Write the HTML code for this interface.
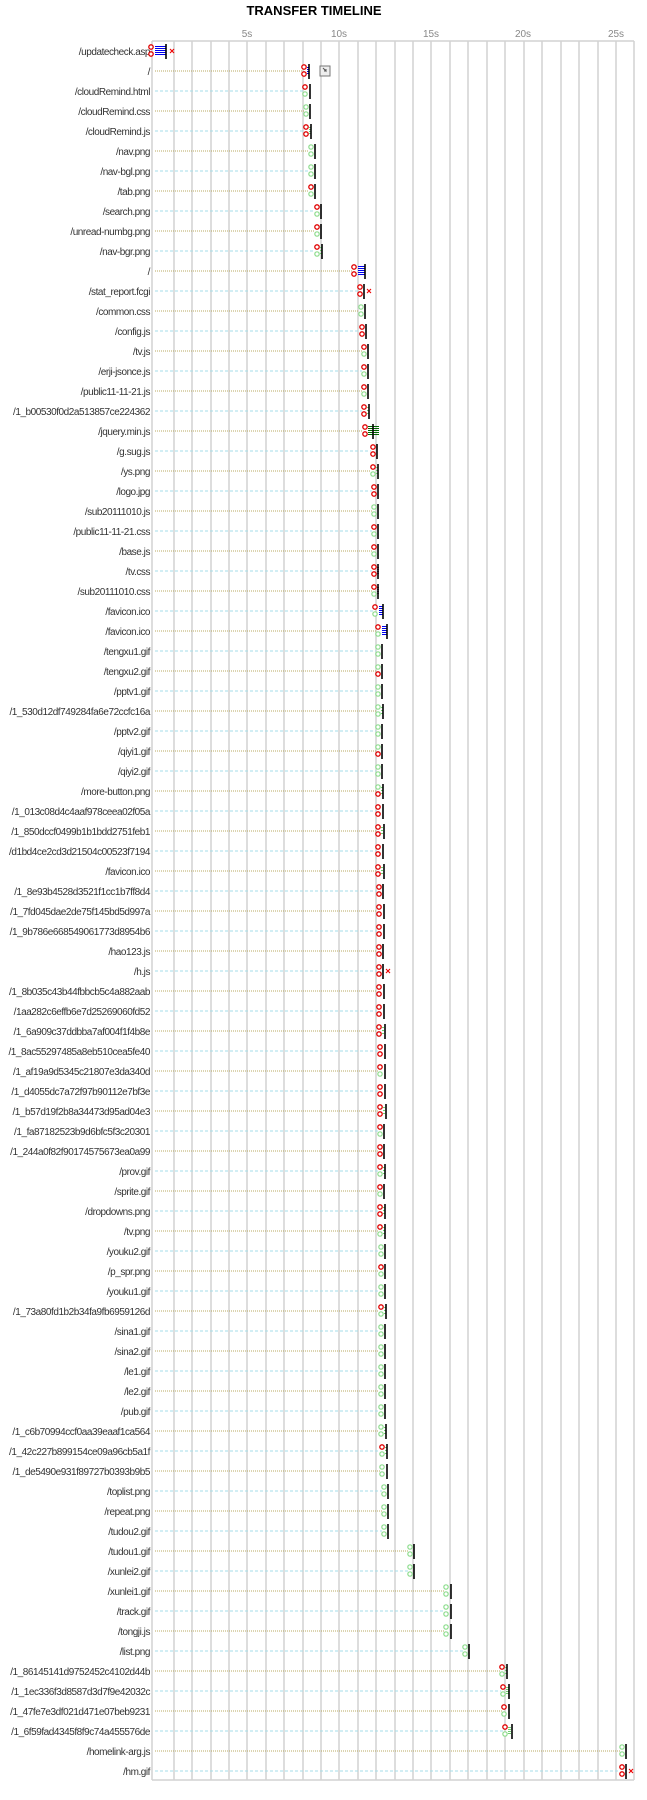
<!DOCTYPE html>
<html><head><meta charset="utf-8">
<style>
html,body{margin:0;padding:0;background:#fff;}
svg{display:block;}
text.l{font-family:"Liberation Sans",sans-serif;font-size:10px;fill:#333;text-anchor:end;letter-spacing:-0.45px;}
text.a{font-family:"Liberation Sans",sans-serif;font-size:10px;fill:#888;text-anchor:middle;}
.gr{stroke:#d2d2d2;stroke-width:1.5;}
.o{stroke:#b8a860;stroke-width:1;stroke-dasharray:1 1;fill:none;}
.c{stroke:#a6dde8;stroke-width:1;stroke-dasharray:3 2;fill:none;}
.e{stroke:#000;stroke-width:1.6;}
.t{stroke:#70d070;stroke-width:1;}
.p{stroke:#803080;stroke-width:1;}
.b{stroke:#0000ee;stroke-width:1;}
.dg{stroke:#006600;stroke-width:1;}
.x{stroke:#e00;stroke-width:1.1;}
</style></head><body>
<svg width="647" height="1800" viewBox="0 0 647 1800" xmlns="http://www.w3.org/2000/svg">
<defs>
<circle id="r" r="2.2" fill="#fff" stroke="#e00000" stroke-width="1.3"/>
<circle id="g" r="2.2" fill="#fff" stroke="#90dd90" stroke-width="1.2"/>
</defs>
<text x="314" y="15" text-anchor="middle" font-family="'Liberation Sans',sans-serif" font-size="13" font-weight="bold" fill="#000">TRANSFER TIMELINE</text>
<text class="a" x="247" y="37">5s</text>
<text class="a" x="339" y="37">10s</text>
<text class="a" x="431" y="37">15s</text>
<text class="a" x="523" y="37">20s</text>
<text class="a" x="616" y="37">25s</text>
<g class="gr">
<path d="M152 41V1780M174 41V1780M192 41V1780M211 41V1780M229 41V1780M247 41V1780M266 41V1780M284 41V1780M303 41V1780M321 41V1780M339 41V1780M358 41V1780M376 41V1780M395 41V1780M413 41V1780M431 41V1780M450 41V1780M468 41V1780M487 41V1780M505 41V1780M524 41V1780M542 41V1780M561 41V1780M579 41V1780M598 41V1780M616 41V1780M634 41V1780M152 41H634M152 1780H634"/>
</g>

<g transform="translate(0,51)"><text class="l" x="150" y="4">/updatecheck.asp</text><use href="#r" x="151" y="-4"/><use href="#r" x="151" y="3"/><path class="b" d="M155 -4.5H166M155 -2.5H166M155 -0.5H166M155 1.5H166M155 3.5H166"/><path class="e" d="M166 -7V8"/><path class="x" d="M170 -2l4 4M174 -2l-4 4"/></g>
<g transform="translate(0,71)"><text class="l" x="150" y="4">/</text><path class="o" d="M155 0H302"/><use href="#r" x="304" y="-4"/><use href="#r" x="304" y="3"/><path class="b" d="M307 -3.5H309M307 -1.5H309M307 0.5H309M307 2.5H309"/><path class="e" d="M309 -7V8"/><rect x="320" y="-5" width="10" height="10" fill="#eee" stroke="#777" stroke-width="1"/><path d="M323 -3l3 3v-2M326 0h-2" stroke="#555" fill="none"/></g>
<g transform="translate(0,91)"><text class="l" x="150" y="4">/cloudRemind.html</text><path class="c" d="M155 0H303"/><use href="#r" x="305" y="-4"/><use href="#g" x="305" y="3"/><path class="e" d="M310 -7V8"/></g>
<g transform="translate(0,111)"><text class="l" x="150" y="4">/cloudRemind.css</text><path class="o" d="M155 0H304"/><use href="#g" x="306" y="-4"/><use href="#g" x="306" y="3"/><path class="e" d="M310 -7V8"/></g>
<g transform="translate(0,131)"><text class="l" x="150" y="4">/cloudRemind.js</text><path class="c" d="M155 0H304"/><use href="#r" x="306" y="-4"/><use href="#r" x="306" y="3"/><path class="t" d="M309 -3.5h2M309 -1.5h2M309 0.5h2M309 2.5h2"/><path class="e" d="M311 -7V8"/></g>
<g transform="translate(0,151)"><text class="l" x="150" y="4">/nav.png</text><path class="o" d="M155 0H309"/><use href="#g" x="311" y="-4"/><use href="#g" x="311" y="3"/><path class="e" d="M315 -7V8"/></g>
<g transform="translate(0,171)"><text class="l" x="150" y="4">/nav-bgl.png</text><path class="c" d="M155 0H309"/><use href="#g" x="311" y="-4"/><use href="#g" x="311" y="3"/><path class="e" d="M315 -7V8"/></g>
<g transform="translate(0,191)"><text class="l" x="150" y="4">/tab.png</text><path class="o" d="M155 0H309"/><use href="#r" x="311" y="-4"/><use href="#g" x="311" y="3"/><path class="e" d="M315 -7V8"/></g>
<g transform="translate(0,211)"><text class="l" x="150" y="4">/search.png</text><path class="c" d="M155 0H315"/><use href="#r" x="317" y="-4"/><use href="#g" x="317" y="3"/><path class="e" d="M321 -7V8"/></g>
<g transform="translate(0,231)"><text class="l" x="150" y="4">/unread-numbg.png</text><path class="o" d="M155 0H315"/><use href="#r" x="317" y="-4"/><use href="#g" x="317" y="3"/><path class="e" d="M321 -7V8"/></g>
<g transform="translate(0,251)"><text class="l" x="150" y="4">/nav-bgr.png</text><path class="c" d="M155 0H315"/><use href="#r" x="317" y="-4"/><use href="#g" x="317" y="3"/><path class="t" d="M320 -3.5h2M320 -0.5h2M320 2.5h2"/><path class="e" d="M322 -7V8"/></g>
<g transform="translate(0,271)"><text class="l" x="150" y="4">/</text><path class="o" d="M155 0H352"/><use href="#r" x="354" y="-4"/><use href="#r" x="354" y="3"/><path class="b" d="M358 -4.5H365M358 -2.5H365M358 -0.5H365M358 1.5H365M358 3.5H365"/><path class="e" d="M365 -7V8"/></g>
<g transform="translate(0,291)"><text class="l" x="150" y="4">/stat_report.fcgi</text><path class="c" d="M155 0H358"/><use href="#r" x="360" y="-4"/><use href="#r" x="360" y="3"/><path class="e" d="M364 -7V8"/><path class="x" d="M367 -2l4 4M371 -2l-4 4"/></g>
<g transform="translate(0,311)"><text class="l" x="150" y="4">/common.css</text><path class="o" d="M155 0H359"/><use href="#g" x="361" y="-4"/><use href="#g" x="361" y="3"/><path class="e" d="M365 -7V8"/></g>
<g transform="translate(0,331)"><text class="l" x="150" y="4">/config.js</text><path class="c" d="M155 0H360"/><use href="#r" x="362" y="-4"/><use href="#r" x="362" y="3"/><path class="e" d="M366 -7V8"/></g>
<g transform="translate(0,351)"><text class="l" x="150" y="4">/tv.js</text><path class="o" d="M155 0H362"/><use href="#r" x="364" y="-4"/><use href="#g" x="364" y="3"/><path class="e" d="M368 -7V8"/></g>
<g transform="translate(0,371)"><text class="l" x="150" y="4">/erji-jsonce.js</text><path class="c" d="M155 0H362"/><use href="#r" x="364" y="-4"/><use href="#g" x="364" y="3"/><path class="e" d="M368 -7V8"/></g>
<g transform="translate(0,391)"><text class="l" x="150" y="4">/public11-11-21.js</text><path class="o" d="M155 0H362"/><use href="#r" x="364" y="-4"/><use href="#g" x="364" y="3"/><path class="e" d="M368 -7V8"/></g>
<g transform="translate(0,411)"><text class="l" x="150" y="4">/1_b00530f0d2a513857ce224362</text><path class="c" d="M155 0H362"/><use href="#r" x="364" y="-4"/><use href="#r" x="364" y="3"/><path class="t" d="M367 -3.5h2M367 -0.5h2M367 2.5h2"/><path class="e" d="M369 -7V8"/></g>
<g transform="translate(0,431)"><text class="l" x="150" y="4">/jquery.min.js</text><path class="o" d="M155 0H363"/><use href="#r" x="365" y="-4"/><use href="#r" x="365" y="3"/><path class="dg" d="M368 -4.5H379M368 -2.5H379M368 -0.5H379M368 1.5H379M368 3.5H379"/><path class="e" d="M373 -7V8"/></g>
<g transform="translate(0,451)"><text class="l" x="150" y="4">/g.sug.js</text><path class="c" d="M155 0H371"/><use href="#r" x="373" y="-4"/><use href="#r" x="373" y="3"/><path class="e" d="M377 -7V8"/></g>
<g transform="translate(0,471)"><text class="l" x="150" y="4">/ys.png</text><path class="o" d="M155 0H371"/><use href="#r" x="373" y="-4"/><use href="#g" x="373" y="3"/><path class="t" d="M376 -3.5h2M376 -0.5h2M376 2.5h2"/><path class="e" d="M378 -7V8"/></g>
<g transform="translate(0,491)"><text class="l" x="150" y="4">/logo.jpg</text><path class="c" d="M155 0H372"/><use href="#r" x="374" y="-4"/><use href="#r" x="374" y="3"/><path class="e" d="M378 -7V8"/></g>
<g transform="translate(0,511)"><text class="l" x="150" y="4">/sub20111010.js</text><path class="o" d="M155 0H372"/><use href="#g" x="374" y="-4"/><use href="#g" x="374" y="3"/><path class="e" d="M378 -7V8"/></g>
<g transform="translate(0,531)"><text class="l" x="150" y="4">/public11-11-21.css</text><path class="c" d="M155 0H372"/><use href="#r" x="374" y="-4"/><use href="#g" x="374" y="3"/><path class="e" d="M378 -7V8"/></g>
<g transform="translate(0,551)"><text class="l" x="150" y="4">/base.js</text><path class="o" d="M155 0H372"/><use href="#r" x="374" y="-4"/><use href="#g" x="374" y="3"/><path class="e" d="M378 -7V8"/></g>
<g transform="translate(0,571)"><text class="l" x="150" y="4">/tv.css</text><path class="c" d="M155 0H372"/><use href="#r" x="374" y="-4"/><use href="#r" x="374" y="3"/><path class="p" d="M377 -3.5h2M377 -1.5h2M377 0.5h2M377 2.5h2"/><path class="e" d="M378 -7V8"/></g>
<g transform="translate(0,591)"><text class="l" x="150" y="4">/sub20111010.css</text><path class="o" d="M155 0H372"/><use href="#r" x="374" y="-4"/><use href="#g" x="374" y="3"/><path class="p" d="M377 -3.5h2M377 -1.5h2M377 0.5h2M377 2.5h2"/><path class="e" d="M378 -7V8"/></g>
<g transform="translate(0,611)"><text class="l" x="150" y="4">/favicon.ico</text><path class="c" d="M155 0H373"/><use href="#r" x="375" y="-4"/><use href="#g" x="375" y="3"/><path class="b" d="M379 -4.5H383M379 -2.5H383M379 -0.5H383M379 1.5H383M379 3.5H383"/><path class="e" d="M383 -7V8"/></g>
<g transform="translate(0,631)"><text class="l" x="150" y="4">/favicon.ico</text><path class="o" d="M155 0H376"/><use href="#r" x="378" y="-4"/><use href="#g" x="378" y="3"/><path class="b" d="M382 -4.5H387M382 -2.5H387M382 -0.5H387M382 1.5H387M382 3.5H387"/><path class="e" d="M387 -7V8"/></g>
<g transform="translate(0,651)"><text class="l" x="150" y="4">/tengxu1.gif</text><path class="c" d="M155 0H376"/><use href="#g" x="378" y="-4"/><use href="#g" x="378" y="3"/><path class="e" d="M382 -7V8"/></g>
<g transform="translate(0,671)"><text class="l" x="150" y="4">/tengxu2.gif</text><path class="o" d="M155 0H376"/><use href="#g" x="378" y="-4"/><use href="#r" x="378" y="3"/><path class="e" d="M382 -7V8"/></g>
<g transform="translate(0,691)"><text class="l" x="150" y="4">/pptv1.gif</text><path class="c" d="M155 0H376"/><use href="#g" x="378" y="-4"/><use href="#g" x="378" y="3"/><path class="e" d="M382 -7V8"/></g>
<g transform="translate(0,711)"><text class="l" x="150" y="4">/1_530d12df749284fa6e72ccfc16a</text><path class="o" d="M155 0H376"/><use href="#g" x="378" y="-4"/><use href="#g" x="378" y="3"/><path class="t" d="M381 -3.5h2M381 -0.5h2M381 2.5h2"/><path class="e" d="M383 -7V8"/></g>
<g transform="translate(0,731)"><text class="l" x="150" y="4">/pptv2.gif</text><path class="c" d="M155 0H376"/><use href="#g" x="378" y="-4"/><use href="#g" x="378" y="3"/><path class="e" d="M382 -7V8"/></g>
<g transform="translate(0,751)"><text class="l" x="150" y="4">/qiyi1.gif</text><path class="o" d="M155 0H376"/><use href="#g" x="378" y="-4"/><use href="#r" x="378" y="3"/><path class="e" d="M382 -7V8"/></g>
<g transform="translate(0,771)"><text class="l" x="150" y="4">/qiyi2.gif</text><path class="c" d="M155 0H376"/><use href="#g" x="378" y="-4"/><use href="#g" x="378" y="3"/><path class="e" d="M382 -7V8"/></g>
<g transform="translate(0,791)"><text class="l" x="150" y="4">/more-button.png</text><path class="o" d="M155 0H376"/><use href="#g" x="378" y="-4"/><use href="#r" x="378" y="3"/><path class="t" d="M381 -3.5h2M381 -0.5h2M381 2.5h2"/><path class="e" d="M383 -7V8"/></g>
<g transform="translate(0,811)"><text class="l" x="150" y="4">/1_013c08d4c4aaf978ceea02f05a</text><path class="c" d="M155 0H376"/><use href="#r" x="378" y="-4"/><use href="#r" x="378" y="3"/><path class="e" d="M383 -7V8"/></g>
<g transform="translate(0,831)"><text class="l" x="150" y="4">/1_850dccf0499b1b1bdd2751feb1</text><path class="o" d="M155 0H376"/><use href="#r" x="378" y="-4"/><use href="#r" x="378" y="3"/><path class="t" d="M381 -3.5h2M381 -0.5h2M381 2.5h2"/><path class="e" d="M384 -7V8"/></g>
<g transform="translate(0,851)"><text class="l" x="150" y="4">/d1bd4ce2cd3d21504c00523f7194</text><path class="c" d="M155 0H376"/><use href="#r" x="378" y="-4"/><use href="#r" x="378" y="3"/><path class="e" d="M383 -7V8"/></g>
<g transform="translate(0,871)"><text class="l" x="150" y="4">/favicon.ico</text><path class="o" d="M155 0H376"/><use href="#r" x="378" y="-4"/><use href="#r" x="378" y="3"/><path class="t" d="M381 -3.5h2M381 -0.5h2M381 2.5h2"/><path class="e" d="M384 -7V8"/></g>
<g transform="translate(0,891)"><text class="l" x="150" y="4">/1_8e93b4528d3521f1cc1b7ff8d4</text><path class="c" d="M155 0H377"/><use href="#r" x="379" y="-4"/><use href="#r" x="379" y="3"/><path class="e" d="M383 -7V8"/></g>
<g transform="translate(0,911)"><text class="l" x="150" y="4">/1_7fd045dae2de75f145bd5d997a</text><path class="o" d="M155 0H377"/><use href="#r" x="379" y="-4"/><use href="#r" x="379" y="3"/><path class="e" d="M384 -7V8"/></g>
<g transform="translate(0,931)"><text class="l" x="150" y="4">/1_9b786e668549061773d8954b6</text><path class="c" d="M155 0H377"/><use href="#r" x="379" y="-4"/><use href="#r" x="379" y="3"/><path class="e" d="M384 -7V8"/></g>
<g transform="translate(0,951)"><text class="l" x="150" y="4">/hao123.js</text><path class="o" d="M155 0H377"/><use href="#r" x="379" y="-4"/><use href="#r" x="379" y="3"/><path class="e" d="M383 -7V8"/></g>
<g transform="translate(0,971)"><text class="l" x="150" y="4">/h.js</text><path class="c" d="M155 0H377"/><use href="#r" x="379" y="-4"/><use href="#r" x="379" y="3"/><path class="e" d="M383 -7V8"/><path class="x" d="M386 -2l4 4M390 -2l-4 4"/></g>
<g transform="translate(0,991)"><text class="l" x="150" y="4">/1_8b035c43b44fbbcb5c4a882aab</text><path class="o" d="M155 0H377"/><use href="#r" x="379" y="-4"/><use href="#r" x="379" y="3"/><path class="e" d="M384 -7V8"/></g>
<g transform="translate(0,1011)"><text class="l" x="150" y="4">/1aa282c6effb6e7d25269060fd52</text><path class="c" d="M155 0H377"/><use href="#r" x="379" y="-4"/><use href="#r" x="379" y="3"/><path class="e" d="M384 -7V8"/></g>
<g transform="translate(0,1031)"><text class="l" x="150" y="4">/1_6a909c37ddbba7af004f1f4b8e</text><path class="o" d="M155 0H377"/><use href="#r" x="379" y="-4"/><use href="#r" x="379" y="3"/><path class="t" d="M382 -3.5h2M382 -0.5h2M382 2.5h2"/><path class="e" d="M385 -7V8"/></g>
<g transform="translate(0,1051)"><text class="l" x="150" y="4">/1_8ac55297485a8eb510cea5fe40</text><path class="c" d="M155 0H378"/><use href="#r" x="380" y="-4"/><use href="#r" x="380" y="3"/><path class="e" d="M385 -7V8"/></g>
<g transform="translate(0,1071)"><text class="l" x="150" y="4">/1_af19a9d5345c21807e3da340d</text><path class="o" d="M155 0H378"/><use href="#r" x="380" y="-4"/><use href="#g" x="380" y="3"/><path class="e" d="M385 -7V8"/></g>
<g transform="translate(0,1091)"><text class="l" x="150" y="4">/1_d4055dc7a72f97b90112e7bf3e</text><path class="c" d="M155 0H378"/><use href="#r" x="380" y="-4"/><use href="#r" x="380" y="3"/><path class="e" d="M385 -7V8"/></g>
<g transform="translate(0,1111)"><text class="l" x="150" y="4">/1_b57d19f2b8a34473d95ad04e3</text><path class="o" d="M155 0H378"/><use href="#r" x="380" y="-4"/><use href="#r" x="380" y="3"/><path class="t" d="M383 -3.5h2M383 -0.5h2M383 2.5h2"/><path class="e" d="M386 -7V8"/></g>
<g transform="translate(0,1131)"><text class="l" x="150" y="4">/1_fa87182523b9d6bfc5f3c20301</text><path class="c" d="M155 0H378"/><use href="#r" x="380" y="-4"/><use href="#g" x="380" y="3"/><path class="e" d="M384 -7V8"/></g>
<g transform="translate(0,1151)"><text class="l" x="150" y="4">/1_244a0f82f90174575673ea0a99</text><path class="o" d="M155 0H378"/><use href="#r" x="380" y="-4"/><use href="#r" x="380" y="3"/><path class="e" d="M384 -7V8"/></g>
<g transform="translate(0,1171)"><text class="l" x="150" y="4">/prov.gif</text><path class="c" d="M155 0H378"/><use href="#r" x="380" y="-4"/><use href="#g" x="380" y="3"/><path class="t" d="M383 -3.5h2M383 -0.5h2M383 2.5h2"/><path class="e" d="M385 -7V8"/></g>
<g transform="translate(0,1191)"><text class="l" x="150" y="4">/sprite.gif</text><path class="o" d="M155 0H378"/><use href="#r" x="380" y="-4"/><use href="#g" x="380" y="3"/><path class="e" d="M384 -7V8"/></g>
<g transform="translate(0,1211)"><text class="l" x="150" y="4">/dropdowns.png</text><path class="c" d="M155 0H378"/><use href="#r" x="380" y="-4"/><use href="#r" x="380" y="3"/><path class="t" d="M383 -3.5h2M383 -0.5h2M383 2.5h2"/><path class="e" d="M385 -7V8"/></g>
<g transform="translate(0,1231)"><text class="l" x="150" y="4">/tv.png</text><path class="o" d="M155 0H378"/><use href="#r" x="380" y="-4"/><use href="#g" x="380" y="3"/><path class="t" d="M383 -3.5h2M383 -0.5h2M383 2.5h2"/><path class="e" d="M385 -7V8"/></g>
<g transform="translate(0,1251)"><text class="l" x="150" y="4">/youku2.gif</text><path class="c" d="M155 0H379"/><use href="#g" x="381" y="-4"/><use href="#g" x="381" y="3"/><path class="e" d="M385 -7V8"/></g>
<g transform="translate(0,1271)"><text class="l" x="150" y="4">/p_spr.png</text><path class="o" d="M155 0H379"/><use href="#r" x="381" y="-4"/><use href="#g" x="381" y="3"/><path class="e" d="M385 -7V8"/></g>
<g transform="translate(0,1291)"><text class="l" x="150" y="4">/youku1.gif</text><path class="c" d="M155 0H379"/><use href="#g" x="381" y="-4"/><use href="#g" x="381" y="3"/><path class="e" d="M385 -7V8"/></g>
<g transform="translate(0,1311)"><text class="l" x="150" y="4">/1_73a80fd1b2b34fa9fb6959126d</text><path class="o" d="M155 0H379"/><use href="#r" x="381" y="-4"/><use href="#g" x="381" y="3"/><path class="t" d="M384 -3.5h2M384 -0.5h2M384 2.5h2"/><path class="e" d="M386 -7V8"/></g>
<g transform="translate(0,1331)"><text class="l" x="150" y="4">/sina1.gif</text><path class="c" d="M155 0H379"/><use href="#g" x="381" y="-4"/><use href="#g" x="381" y="3"/><path class="e" d="M385 -7V8"/></g>
<g transform="translate(0,1351)"><text class="l" x="150" y="4">/sina2.gif</text><path class="o" d="M155 0H379"/><use href="#g" x="381" y="-4"/><use href="#g" x="381" y="3"/><path class="e" d="M385 -7V8"/></g>
<g transform="translate(0,1371)"><text class="l" x="150" y="4">/le1.gif</text><path class="c" d="M155 0H379"/><use href="#g" x="381" y="-4"/><use href="#g" x="381" y="3"/><path class="e" d="M385 -7V8"/></g>
<g transform="translate(0,1391)"><text class="l" x="150" y="4">/le2.gif</text><path class="o" d="M155 0H379"/><use href="#g" x="381" y="-4"/><use href="#g" x="381" y="3"/><path class="e" d="M385 -7V8"/></g>
<g transform="translate(0,1411)"><text class="l" x="150" y="4">/pub.gif</text><path class="c" d="M155 0H379"/><use href="#g" x="381" y="-4"/><use href="#g" x="381" y="3"/><path class="e" d="M385 -7V8"/></g>
<g transform="translate(0,1431)"><text class="l" x="150" y="4">/1_c6b70994ccf0aa39eaaf1ca564</text><path class="o" d="M155 0H379"/><use href="#g" x="381" y="-4"/><use href="#g" x="381" y="3"/><path class="t" d="M384 -3.5h2M384 -0.5h2M384 2.5h2"/><path class="e" d="M386 -7V8"/></g>
<g transform="translate(0,1451)"><text class="l" x="150" y="4">/1_42c227b899154ce09a96cb5a1f</text><path class="c" d="M155 0H380"/><use href="#r" x="382" y="-4"/><use href="#g" x="382" y="3"/><path class="t" d="M385 -3.5h2M385 -0.5h2M385 2.5h2"/><path class="e" d="M387 -7V8"/></g>
<g transform="translate(0,1471)"><text class="l" x="150" y="4">/1_de5490e931f89727b0393b9b5</text><path class="o" d="M155 0H380"/><use href="#g" x="382" y="-4"/><use href="#g" x="382" y="3"/><path class="e" d="M387 -7V8"/></g>
<g transform="translate(0,1491)"><text class="l" x="150" y="4">/toplist.png</text><path class="c" d="M155 0H382"/><use href="#g" x="384" y="-4"/><use href="#g" x="384" y="3"/><path class="e" d="M388 -7V8"/></g>
<g transform="translate(0,1511)"><text class="l" x="150" y="4">/repeat.png</text><path class="o" d="M155 0H382"/><use href="#g" x="384" y="-4"/><use href="#g" x="384" y="3"/><path class="e" d="M388 -7V8"/></g>
<g transform="translate(0,1531)"><text class="l" x="150" y="4">/tudou2.gif</text><path class="c" d="M155 0H382"/><use href="#g" x="384" y="-4"/><use href="#g" x="384" y="3"/><path class="e" d="M388 -7V8"/></g>
<g transform="translate(0,1551)"><text class="l" x="150" y="4">/tudou1.gif</text><path class="o" d="M155 0H408"/><use href="#g" x="410" y="-4"/><use href="#g" x="410" y="3"/><path class="e" d="M414 -7V8"/></g>
<g transform="translate(0,1571)"><text class="l" x="150" y="4">/xunlei2.gif</text><path class="c" d="M155 0H408"/><use href="#g" x="410" y="-4"/><use href="#g" x="410" y="3"/><path class="e" d="M414 -7V8"/></g>
<g transform="translate(0,1591)"><text class="l" x="150" y="4">/xunlei1.gif</text><path class="o" d="M155 0H444"/><use href="#g" x="446" y="-4"/><use href="#g" x="446" y="3"/><path class="e" d="M451 -7V8"/></g>
<g transform="translate(0,1611)"><text class="l" x="150" y="4">/track.gif</text><path class="c" d="M155 0H444"/><use href="#g" x="446" y="-4"/><use href="#g" x="446" y="3"/><path class="e" d="M451 -7V8"/></g>
<g transform="translate(0,1631)"><text class="l" x="150" y="4">/tongji.js</text><path class="o" d="M155 0H444"/><use href="#g" x="446" y="-4"/><use href="#g" x="446" y="3"/><path class="e" d="M451 -7V8"/></g>
<g transform="translate(0,1651)"><text class="l" x="150" y="4">/list.png</text><path class="c" d="M155 0H463"/><use href="#g" x="465" y="-4"/><use href="#g" x="465" y="3"/><path class="e" d="M469 -7V8"/></g>
<g transform="translate(0,1671)"><text class="l" x="150" y="4">/1_86145141d9752452c4102d44b</text><path class="o" d="M155 0H500"/><use href="#r" x="502" y="-4"/><use href="#g" x="502" y="3"/><path class="t" d="M505 -3.5h2M505 -0.5h2M505 2.5h2"/><path class="e" d="M507 -7V8"/></g>
<g transform="translate(0,1691)"><text class="l" x="150" y="4">/1_1ec336f3d8587d3d7f9e42032c</text><path class="c" d="M155 0H501"/><use href="#r" x="503" y="-4"/><use href="#g" x="503" y="3"/><path class="t" d="M506 -3.5h3M506 -1.5h3M506 0.5h3M506 2.5h3"/><path class="e" d="M509 -7V8"/></g>
<g transform="translate(0,1711)"><text class="l" x="150" y="4">/1_47fe7e3df021d471e07beb9231</text><path class="o" d="M155 0H502"/><use href="#r" x="504" y="-4"/><use href="#g" x="504" y="3"/><path class="e" d="M509 -7V8"/></g>
<g transform="translate(0,1731)"><text class="l" x="150" y="4">/1_6f59fad4345f8f9c74a455576de</text><path class="c" d="M155 0H503"/><use href="#r" x="505" y="-4"/><use href="#g" x="505" y="3"/><path class="t" d="M508 -3.5h3M508 -1.5h3M508 0.5h3M508 2.5h3"/><path class="e" d="M512 -7V8"/></g>
<g transform="translate(0,1751)"><text class="l" x="150" y="4">/homelink-arg.js</text><path class="o" d="M155 0H620"/><use href="#g" x="622" y="-4"/><use href="#g" x="622" y="3"/><path class="e" d="M626 -7V8"/></g>
<g transform="translate(0,1771)"><text class="l" x="150" y="4">/hm.gif</text><path class="c" d="M155 0H620"/><use href="#r" x="622" y="-4"/><use href="#r" x="622" y="3"/><path class="e" d="M626 -7V8"/><path class="x" d="M629 -2l4 4M633 -2l-4 4"/></g>
</svg>
</body></html>
